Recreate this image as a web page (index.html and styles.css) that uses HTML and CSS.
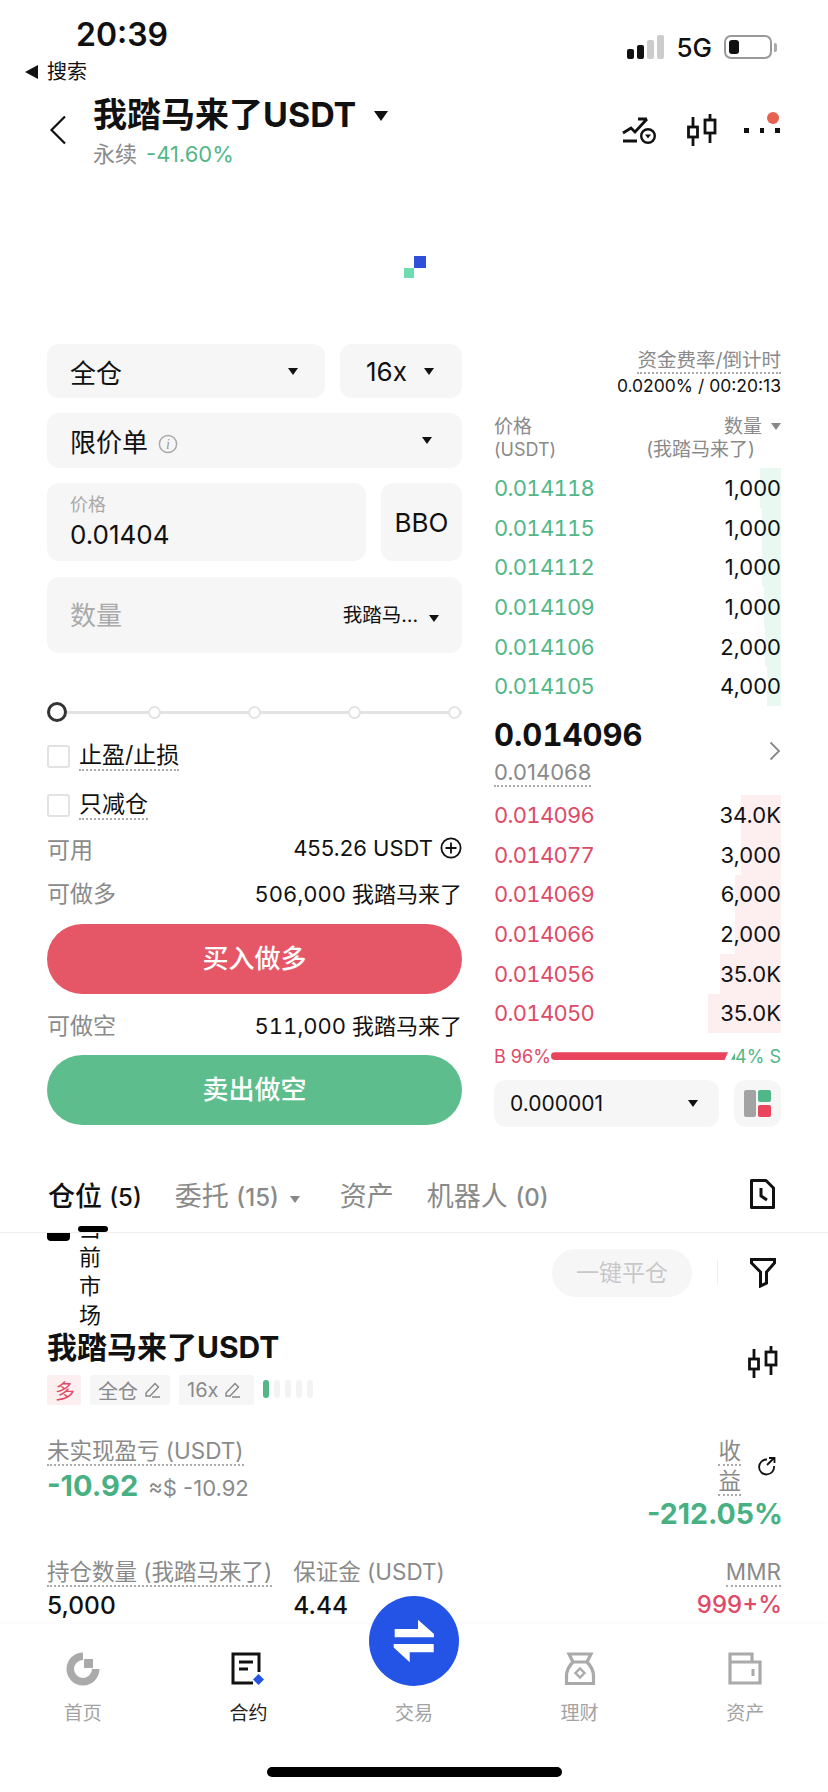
FILE: index.html
```html
<!DOCTYPE html>
<html>
<head>
    <title>我踏马来了USDT</title>
    <link rel="stylesheet" href="styles.css">
</head>
<body>
    <div class="status-bar">
        <div class="status-left">
            <div class="time">20:39</div>
            <div class="back-app"><span class="back-tri"></span>搜索</div>
        </div>
        <div class="status-right">
            <div class="signal">
                <i class="on s1"></i><i class="on s2"></i><i class="s3"></i><i class="s4"></i>
            </div>
            <span class="net">5G</span>
            <div class="battery"><i></i></div>
            <div class="battery-cap"></div>
        </div>
    </div>

    <div class="header">
        <svg class="back" width="18" height="30" viewBox="0 0 18 30"><path d="M16 1.500 2.500 15 16 28.500" fill="none" stroke="#111" stroke-width="2.200"/></svg>
        <div class="header-title">
            <div class="pair">我踏马来了USDT<span class="caret caret-big"></span></div>
            <div class="sub"><span class="sub-name">永续</span><span class="sub-change">-41.60%</span></div>
        </div>
        <div class="header-icons">
            <svg class="chart-ic" width="34" height="28" viewBox="0 0 34 28"><path d="M1 17 9 12l4 4L25 3M16 3h9" fill="none" stroke="#111" stroke-width="2.800"/><path d="M1 25H15" stroke="#111" stroke-width="3"/><circle cx="26" cy="20" r="6.800" fill="#fff" stroke="#111" stroke-width="2.400"/><path d="M23 18.500h6L26 22.500z" fill="#111"/></svg>
            <svg class="candle-ic" width="30" height="32" viewBox="0 0 30 32"><path d="M6 3v10M6 23v9M23 0v6M23 19v10" stroke="#111" stroke-width="2.800"/><rect x="1.500" y="13" width="9" height="10" fill="none" stroke="#111" stroke-width="2.800"/><rect x="18" y="6" width="10" height="13" fill="none" stroke="#111" stroke-width="2.800"/></svg>
            <div class="more"><i></i><i></i><i></i><b></b></div>
        </div>
    </div>

    <div class="loader"><i class="blue"></i><i class="green"></i></div>

    <div class="trade">
        <div class="form">
            <div class="form-row">
                <div class="field margin-mode"><span>全仓</span><span class="caret"></span></div>
                <div class="field leverage"><span>16x</span><span class="caret"></span></div>
            </div>
            <div class="field order-type">
                <span>限价单<svg class="info" width="20" height="20" viewBox="0 0 20 20"><circle cx="10" cy="10" r="8.600" fill="none" stroke="#aaa" stroke-width="1.500"/><text x="10" y="15" text-anchor="middle" class="info-i">i</text></svg></span>
                <span class="caret"></span>
            </div>
            <div class="form-row">
                <div class="field price-box">
                    <div class="field-label">价格</div>
                    <div class="field-value">0.01404</div>
                </div>
                <div class="field bbo">BBO</div>
            </div>
            <div class="field amount-box">
                <span class="amount-ph">数量</span>
                <span class="amount-unit">我踏马…<span class="caret"></span></span>
            </div>

            <div class="slider">
                <i class="thumb"></i><i class="stop"></i><i class="stop"></i><i class="stop"></i><i class="stop"></i>
            </div>

            <div class="check-row"><i class="box"></i><span class="dotted">止盈/止损</span></div>
            <div class="check-row check-second"><i class="box"></i><span class="dotted">只减仓</span></div>

            <div class="info-row info-first">
                <span class="muted">可用</span>
                <span class="info-val">455.26 USDT<svg class="plus" width="22" height="22" viewBox="0 0 22 22"><circle cx="11" cy="11" r="9.600" fill="none" stroke="#111" stroke-width="1.800"/><path d="M11 5.500v11M5.500 11h11" stroke="#111" stroke-width="1.800"/></svg></span>
            </div>
            <div class="info-row">
                <span class="muted">可做多</span>
                <span class="info-val">506,000 我踏马来了</span>
            </div>
            <div class="btn btn-buy">买入做多</div>
            <div class="info-row info-short">
                <span class="muted">可做空</span>
                <span class="info-val">511,000 我踏马来了</span>
            </div>
            <div class="btn btn-sell">卖出做空</div>
        </div>

        <div class="book">
            <div class="funding">
                <div><span class="dotted funding-label">资金费率/倒计时</span></div>
                <div class="funding-val">0.0200% / 00:20:13</div>
            </div>
            <div class="book-head">
                <div>价格<br><span class="head-usdt">(USDT)</span></div>
                <div class="book-head-r">数量<span class="caret caret-grey"></span><br><span class="unit-name">(我踏马来了)</span></div>
            </div>
            <div class="book-rows">
                <div class="ob-row ask"><i class="depth" style="width:21px"></i><span>0.014118</span><b>1,000</b></div>
                <div class="ob-row ask"><i class="depth" style="width:19px"></i><span>0.014115</span><b>1,000</b></div>
                <div class="ob-row ask"><i class="depth" style="width:19px"></i><span>0.014112</span><b>1,000</b></div>
                <div class="ob-row ask"><i class="depth" style="width:17px"></i><span>0.014109</span><b>1,000</b></div>
                <div class="ob-row ask"><i class="depth" style="width:16px"></i><span>0.014106</span><b>2,000</b></div>
                <div class="ob-row ask"><i class="depth" style="width:14px"></i><span>0.014105</span><b>4,000</b></div>
            </div>
            <div class="mid">
                <div>
                    <div class="mid-price">0.014096</div>
                    <span class="dotted mid-mark">0.014068</span>
                </div>
                <svg class="mid-arrow" width="12" height="20" viewBox="0 0 12 20"><path d="M1.500 1.500 10 10l-8.500 8.500" fill="none" stroke="#888" stroke-width="1.800"/></svg>
            </div>
            <div class="book-rows">
                <div class="ob-row bid"><i class="depth" style="width:40px"></i><span>0.014096</span><b>34.0K</b></div>
                <div class="ob-row bid"><i class="depth" style="width:40px"></i><span>0.014077</span><b>3,000</b></div>
                <div class="ob-row bid"><i class="depth" style="width:46px"></i><span>0.014069</span><b>6,000</b></div>
                <div class="ob-row bid"><i class="depth" style="width:46px"></i><span>0.014066</span><b>2,000</b></div>
                <div class="ob-row bid"><i class="depth" style="width:61px"></i><span>0.014056</span><b>35.0K</b></div>
                <div class="ob-row bid"><i class="depth" style="width:73px"></i><span>0.014050</span><b>35.0K</b></div>
            </div>
            <div class="ratio">
                <span class="ratio-b">B 96%</span>
                <i class="ratio-red"></i>
                <i class="ratio-green"></i>
                <span class="ratio-s">4% S</span>
            </div>
            <div class="book-tools">
                <div class="field step"><span>0.000001</span><span class="caret"></span></div>
                <div class="field layout-btn">
                    <i class="lay-grey"></i>
                    <div class="lay-col"><i class="lay-green"></i><i class="lay-red"></i></div>
                </div>
            </div>
        </div>
    </div>

    <div class="tabs">
        <span class="tab tab-on">仓位 <em>(5)</em></span>
        <span class="tab tab-orders">委托 <em>(15)</em><span class="caret caret-grey"></span></span>
        <span class="tab tab-assets">资产</span>
        <span class="tab tab-bots">机器人 <em>(0)</em></span>
        <svg class="tab-clock" width="25" height="30" viewBox="0 0 25 30"><path d="M1.500 1.500H16L23.500 9V28.500H1.500Z" fill="none" stroke="#111" stroke-width="3" stroke-linejoin="round"/><path d="M11 9v8l6 4" fill="none" stroke="#111" stroke-width="3"/></svg>
    </div>

    <div class="scope">
        <i class="scope-blob"></i>
        <div class="scope-clip"><div class="scope-text">当前市场</div></div>
        <i class="scope-pill"></i>
        <div class="close-all">一键平仓</div>
        <i class="scope-line"></i>
        <svg class="filter" width="26" height="30" viewBox="0 0 26 30"><path d="M1.500 1.500h23V5L16.500 14v11l-6 3V14L1.500 5z" fill="none" stroke="#111" stroke-width="3"/></svg>
    </div>

    <div class="position">
        <div class="pos-head">
            <div>
                <div class="pos-name">我踏马来了USDT</div>
                <div class="tags">
                    <span class="tag tag-long">多</span>
                    <span class="tag">全仓<svg width="18" height="18" viewBox="0 0 18 18"><path d="M2 12 11 2.500l3.500 3.500L6 15H2zM8 16h8" fill="none" stroke="#888" stroke-width="1.400"/></svg></span>
                    <span class="tag tag-lev">16x<svg width="18" height="18" viewBox="0 0 18 18"><path d="M2 12 11 2.500l3.500 3.500L6 15H2zM8 16h8" fill="none" stroke="#888" stroke-width="1.400"/></svg></span>
                    <span class="adl"><i class="adl-on"></i><i></i><i></i><i></i><i></i></span>
                </div>
            </div>
            <svg class="pos-candle" width="30" height="32" viewBox="0 0 30 32"><path d="M6 3v10M6 23v9M23 0v6M23 19v10" stroke="#111" stroke-width="2.800"/><rect x="1.500" y="13" width="9" height="10" fill="none" stroke="#111" stroke-width="2.800"/><rect x="18" y="6" width="10" height="13" fill="none" stroke="#111" stroke-width="2.800"/></svg>
        </div>

        <div class="stats-pnl">
            <div>
                <span class="dotted stat-label">未实现盈亏 (USDT)</span>
                <div class="pnl-line"><span class="pnl">-10.92</span><span class="pnl-usd">≈$ -10.92</span></div>
            </div>
            <div class="roi">
                <div class="roi-top">
                    <div class="roi-label"><span class="dotted stat-label">收益</span></div>
                    <svg width="20" height="20" viewBox="0 0 20 20"><path d="M10 3.500A7.500 7.500 0 1 0 17 10" fill="none" stroke="#111" stroke-width="1.800"/><path d="M10 9 17 2M12 2h5.500v5" fill="none" stroke="#111" stroke-width="1.800"/></svg>
                </div>
                <div class="pnl roi-val">-212.05%</div>
            </div>
        </div>

        <div class="stats-size">
            <div class="stat-size">
                <span class="dotted stat-label">持仓数量 (我踏马来了)</span>
                <div class="stat-val">5,000</div>
            </div>
            <div class="stat-margin">
                <span class="stat-label">保证金 (USDT)</span>
                <div class="stat-val">4.44</div>
            </div>
            <div class="stat-mmr">
                <span class="dotted stat-label">MMR</span>
                <div class="stat-val mmr-val">999+%</div>
            </div>
        </div>
    </div>

    <div class="tabbar">
        <div class="nav-item">
            <svg width="34" height="34" viewBox="0 0 34 34"><path d="M17 .5V8A9 9 0 1 0 26 17H33.500A16.500 16.500 0 1 1 17 .5Z" fill="#aaa"/><rect x="18" y="7" width="9" height="9" fill="#aaa"/></svg>
            <span>首页</span>
        </div>
        <div class="nav-item nav-on">
            <svg width="34" height="34" viewBox="0 0 34 34"><path d="M28 20V2H2v29h20" fill="none" stroke="#111" stroke-width="3"/><path d="M8 10h14M8 17h9" fill="none" stroke="#111" stroke-width="3"/><path d="M27.500 22l5.500 5.500-5.500 5.500-5.500-5.500z" fill="#2354e6"/></svg>
            <span>合约</span>
        </div>
        <div class="nav-item nav-trade">
            <span>交易</span>
        </div>
        <div class="nav-item">
            <svg width="32" height="34" viewBox="0 0 32 34"><path d="M5 2h22l-4 8H9zM9 10C5 14 2.500 19 2.500 24v7.500h27V24c0-5-2.500-10-6.500-14" fill="none" stroke="#aaa" stroke-width="3.200"/><path d="M16 16.500l4.500 4.500-4.500 4.500-4.500-4.500z" fill="none" stroke="#aaa" stroke-width="2.400"/></svg>
            <span>理财</span>
        </div>
        <div class="nav-item">
            <svg width="34" height="34" viewBox="0 0 34 34"><path d="M2 10V2h22v8M2 10h30v21H2z" fill="none" stroke="#aaa" stroke-width="3.200"/><path d="M25 17v7" stroke="#aaa" stroke-width="3"/></svg>
            <span>资产</span>
        </div>
    </div>
    <div class="trade-fab">
        <svg width="42" height="44" viewBox="0 0 42 44"><path d="M1.700 10H25V.7L41 15v3.300H1.700zM40.700 25v8.300H16.700v10L.7 28.500V25z" fill="#fff"/></svg>
    </div>
    <div class="home-bar"></div>
</body>
</html>
```

FILE: styles.css
```css
* {
    box-sizing: border-box;
}
body {
    margin: 0;
    width: 828px;
    height: 1792px;
    overflow: hidden;
    position: relative;
    background: #fff;
    color: #111;
    font-family: Inter, "Noto Sans CJK SC", sans-serif;
}
i, em {
    font-style: normal;
}
.caret {
    display: inline-block;
    width: 0;
    height: 0;
    border-left: 5px solid transparent;
    border-right: 5px solid transparent;
    border-top: 7px solid #111;
}
.caret-big {
    border-left-width: 7px;
    border-right-width: 7px;
    border-top-width: 10px;
    margin-left: 18px;
    vertical-align: 6px;
}
.caret-grey {
    border-top-color: #888;
}
.dotted {
    border-bottom: 2px dotted #aaa;
}
.muted {
    color: #8a8a8a;
}

/* status bar */
.status-bar {
    height: 89px;
    display: flex;
    justify-content: space-between;
}
.status-left {
    padding-top: 17px;
}
.time {
    margin-left: 76px;
    font-size: 32px;
    font-weight: 600;
    line-height: 36px;
}
.back-app {
    display: flex;
    align-items: center;
    margin-left: 25px;
    margin-top: 6px;
    font-size: 20px;
    line-height: 26px;
}
.back-tri {
    width: 0;
    height: 0;
    margin-right: 9px;
    border-top: 7.500px solid transparent;
    border-bottom: 7.500px solid transparent;
    border-right: 13px solid #111;
}
.status-right {
    display: flex;
    align-items: center;
    height: 48px;
    margin-top: 23px;
    padding-right: 51px;
}
.signal {
    display: flex;
    align-items: flex-end;
    gap: 3px;
    height: 24px;
}
.signal i {
    width: 7px;
    background: #ccc;
    border-radius: 2px;
}
.signal .on {
    background: #111;
}
.s1 { height: 10px; }
.s2 { height: 14px; }
.s3 { height: 19px; }
.s4 { height: 24px; }
.net {
    margin-left: 12px;
    font-size: 26px;
    font-weight: 500;
}
.battery {
    width: 48px;
    height: 24px;
    margin-left: 12px;
    padding: 3px;
    border: 2px solid #999;
    border-radius: 7px;
}
.battery i {
    display: block;
    width: 10px;
    height: 14px;
    background: #111;
    border-radius: 3px;
}
.battery-cap {
    width: 3px;
    height: 9px;
    margin-left: 2px;
    background: #aaa;
    border-radius: 0 2px 2px 0;
}

/* page header */
.header {
    height: 81px;
    display: flex;
    padding-right: 48px;
}
.back {
    margin: 26px 26px 0 49px;
}
.pair {
    font-size: 34px;
    font-weight: 700;
    line-height: 52px;
}
.sub {
    font-size: 22px;
    line-height: 30px;
    margin-top: -2px;
}
.sub-name {
    color: #8a8a8a;
}
.sub-change {
    color: #52b788;
    margin-left: 9px;
}
.header-icons {
    display: flex;
    margin-left: auto;
    padding-top: 25px;
    gap: 29px;
}
.chart-ic {
    margin-top: 2px;
}
.candle-ic {
    margin: 0 -2px 0 2px;
}
.more {
    position: relative;
    display: flex;
    gap: 11px;
    width: 36px;
    padding-top: 14px;
}
.more i {
    width: 5px;
    height: 5px;
    background: #111;
}
.more b {
    position: absolute;
    right: 1px;
    top: -2px;
    width: 12px;
    height: 12px;
    border-radius: 50%;
    background: #e8604f;
}

/* chart loading mark */
.loader {
    height: 174px;
    position: relative;
}
.loader i {
    position: absolute;
}
.blue {
    left: 414px;
    top: 86px;
    width: 12px;
    height: 12px;
    background: #2f4fd8;
}
.green {
    left: 404px;
    top: 98px;
    width: 10px;
    height: 10px;
    background: #6fdcb0;
}

/* order form + book */
.trade {
    display: flex;
    padding: 0 47px;
    gap: 32px;
}
.form {
    width: 415px;
}
.form-row {
    display: flex;
    gap: 15px;
}
.field {
    display: flex;
    align-items: center;
    justify-content: space-between;
    background: #f6f6f7;
    border-radius: 12px;
}
.margin-mode {
    flex: 1;
    height: 54px;
    padding: 0 27px 0 23px;
    font-size: 26px;
}
.leverage {
    width: 122px;
    height: 54px;
    padding: 0 28px 0 26px;
    font-size: 26px;
}
.order-type {
    height: 55px;
    margin: 15px 0;
    padding: 0 30px 0 23px;
    font-size: 26px;
}
.info {
    margin-left: 10px;
    vertical-align: -2px;
}
.info-i {
    font: italic 14px "Liberation Serif", serif;
    fill: #999;
}
.price-box {
    flex: 1;
    height: 78px;
    display: block;
    padding: 10px 23px;
}
.field-label {
    color: #aaa;
    font-size: 18px;
    line-height: 24px;
}
.field-value {
    font-size: 26px;
    line-height: 36px;
}
.bbo {
    width: 81px;
    height: 78px;
    justify-content: center;
    font-size: 26px;
}
.amount-box {
    height: 76px;
    margin-top: 16px;
    padding: 0 23px 4px;
}
.amount-ph {
    color: #aaa;
    font-size: 26px;
}
.amount-unit {
    font-size: 19.500px;
}
.amount-unit .caret {
    margin-left: 11px;
}

.slider {
    display: flex;
    align-items: center;
    height: 20px;
    margin-top: 49px;
    background: linear-gradient(#e3e3e3, #e3e3e3) center / 100% 3px no-repeat;
}
.thumb {
    width: 20px;
    height: 20px;
    background: #fff;
    border: 3px solid #333;
    border-radius: 50%;
}
.stop {
    width: 13px;
    height: 13px;
    margin-left: 87px;
    background: #fff;
    border: 2px solid #e3e3e3;
    border-radius: 50%;
}
.thumb + .stop {
    margin-left: 81px;
}
.check-row {
    display: flex;
    align-items: center;
    gap: 9px;
    margin-top: 21px;
    height: 26px;
    font-size: 23px;
}
.check-second {
    margin-top: 23px;
}
.box {
    width: 23px;
    height: 23px;
    border: 2px solid #e2e2e2;
    border-radius: 3px;
}
.check-row .dotted {
    line-height: 28px;
}
.info-row {
    display: flex;
    justify-content: space-between;
    align-items: center;
    height: 30px;
    margin-top: 14px;
    font-size: 22px;
}
.info-row .muted {
    font-size: 23px;
}
.info-first {
    margin-top: 15px;
}
.info-val {
    display: flex;
    align-items: center;
    font-variant-numeric: tabular-nums;
}
.info-first .info-val {
    font-variant-numeric: normal;
}
.plus {
    margin-left: 7px;
}
.btn {
    height: 70px;
    border-radius: 35px;
    color: #fff;
    font-size: 26px;
    font-weight: 500;
    line-height: 70px;
    text-align: center;
}
.btn-buy {
    margin-top: 17px;
    background: #e55766;
}
.btn-sell {
    margin-top: 16px;
    background: #5dbd8c;
}
.info-short {
    margin-top: 15px;
}

.book {
    width: 287px;
    padding-top: 3px;
}
.funding {
    text-align: right;
}
.funding-label {
    color: #8a8a8a;
    font-size: 19.500px;
    line-height: 26px;
}
.funding-val {
    font-size: 17.500px;
    line-height: 24px;
    margin-top: 1px;
}
.book-head {
    display: flex;
    justify-content: space-between;
    margin-top: 17px;
    color: #8a8a8a;
    font-size: 19px;
    line-height: 23px;
}
.head-usdt {
    font-size: 18px;
}
.book-head-r {
    text-align: right;
}
.book-head-r .caret {
    margin-left: 9px;
    vertical-align: 3px;
}
.unit-name {
    margin-right: 26px;
}
.book-rows {
    margin-top: 7px;
}
.ob-row {
    position: relative;
    display: flex;
    justify-content: space-between;
    align-items: center;
    height: 39.700px;
    font-size: 22px;
}
.ob-row b {
    position: relative;
    font-weight: 400;
}
.ob-row span {
    position: relative;
    font-variant-numeric: tabular-nums;
    letter-spacing: -0.7px;
}
.depth {
    position: absolute;
    right: 0;
    top: 0;
    bottom: 0;
}
.ask span { color: #52b788; }
.ask .depth { background: #e9f8f1; }
.bid span { color: #dd4b68; }
.bid .depth { background: #fdeef0; }
.mid {
    display: flex;
    justify-content: space-between;
    align-items: flex-start;
    height: 86px;
    margin-bottom: -4px;
    padding-top: 9px;
}
.mid-price {
    font-size: 31px;
    font-weight: 700;
    line-height: 40px;
    font-variant-numeric: tabular-nums;
}
.mid-mark {
    display: inline-block;
    margin-top: 4px;
    color: #8a8a8a;
    font-size: 22px;
    line-height: 26px;
}
.mid-arrow {
    margin-top: 26px;
}
.ratio {
    display: flex;
    align-items: center;
    height: 24px;
    margin-top: 11px;
    font-size: 18px;
}
.ratio-b {
    color: #dd4b68;
    width: 57px;
}
.ratio-s {
    color: #52b788;
    margin-left: auto;
}
.ratio-red {
    width: 177px;
    height: 8px;
    background: #e8455c;
    border-radius: 4px 0 0 4px;
    clip-path: polygon(0 0, 100% 0, 98% 100%, 0 100%);
}
.ratio-green {
    width: 4px;
    height: 7px;
    margin-left: 3px;
    background: #52b788;
    clip-path: polygon(100% 0, 100% 100%, 0 100%);
}
.book-tools {
    display: flex;
    justify-content: space-between;
    margin-top: 12px;
}
.step {
    width: 225px;
    height: 47px;
    padding: 0 21px 0 16px;
    font-size: 21px;
}
.layout-btn {
    width: 47px;
    height: 47px;
    justify-content: center;
    gap: 2px;
}
.lay-grey {
    width: 12px;
    height: 27px;
    background: #a3a3a3;
    border-radius: 2px;
}
.lay-col {
    display: flex;
    flex-direction: column;
    gap: 3px;
}
.lay-green, .lay-red {
    width: 13px;
    height: 12px;
    border-radius: 2px;
}
.lay-green { background: #52b788; }
.lay-red { background: #e8455c; }

/* position tabs */
.tabs {
    display: flex;
    align-items: center;
    height: 106px;
    padding: 29px 53px 0 48px;
    border-bottom: 1px solid #eee;
    font-size: 27px;
    color: #8a8a8a;
}
.tab em {
    font-size: 24px;
    font-weight: 500;
}
.tab-on {
    color: #111;
    font-weight: 500;
}
.tab-orders {
    margin-left: 33px;
}
.tab-orders .caret {
    margin-left: 11px;
    vertical-align: 3px;
}
.tab-assets {
    margin-left: 40px;
}
.tab-bots {
    margin-left: 33px;
}
.tab-clock {
    margin-left: auto;
}

.scope {
    position: relative;
    display: flex;
    height: 98px;
    padding-left: 47px;
}
.scope-blob {
    width: 23px;
    height: 8px;
    background: #000;
    border-radius: 0 0 4px 4px;
}
.scope-clip {
    width: 22px;
    height: 98px;
    margin-left: 9px;
    overflow: hidden;
}
.scope-text {
    margin-top: -19px;
    font-size: 22px;
    line-height: 29px;
}
.scope-pill {
    position: absolute;
    left: 78px;
    top: -7px;
    width: 30px;
    height: 6px;
    background: #000;
    border-radius: 3px;
}
.close-all {
    width: 140px;
    height: 48px;
    margin: 16px 0 0 auto;
    background: #f6f6f7;
    border-radius: 24px;
    color: #c8c8c8;
    font-size: 23px;
    line-height: 48px;
    text-align: center;
}
.scope-line {
    width: 1px;
    height: 25px;
    margin: 27px 32px 0 25px;
    background: #eee;
}
.filter {
    margin: 25px 52px 0 0;
}

.position {
    padding: 0 47px;
}
.pos-head {
    display: flex;
    justify-content: space-between;
    height: 74px;
}
.pos-name {
    font-size: 30px;
    font-weight: 700;
    line-height: 32px;
}
.pos-candle {
    margin: 15px 3px 0 0;
}
.tags {
    display: flex;
    margin-top: 12px;
    gap: 9px;
    font-size: 20px;
    color: #8a8a8a;
}
.tag {
    display: flex;
    align-items: center;
    gap: 6px;
    width: 80px;
    height: 30px;
    padding-left: 8px;
    background: #f6f6f7;
    border-radius: 2px;
}
.tag-long {
    width: 34px;
    color: #dd4b68;
    background: #fdeef0;
}
.tag-lev {
    width: 75px;
}
.adl {
    display: flex;
    gap: 5px;
    padding-top: 5px;
}
.adl i {
    width: 6px;
    height: 18px;
    background: #f3f3f3;
    border-radius: 3px;
}
.adl .adl-on {
    background: #52b788;
}
.stat-label {
    color: #8a8a8a;
    font-size: 22.500px;
    line-height: 26px;
}
.stats-pnl {
    display: flex;
    justify-content: space-between;
    margin-top: 33px;
}
.pnl-line {
    display: flex;
    align-items: baseline;
    margin-top: 3px;
}
.pnl {
    color: #48b183;
    font-size: 29px;
    font-weight: 700;
    line-height: 38px;
}
.pnl-usd {
    color: #8a8a8a;
    font-size: 22px;
    margin-left: 10px;
}
.roi {
    margin-top: -2px;
    text-align: right;
}
.roi-top {
    display: flex;
    justify-content: flex-end;
    align-items: center;
    gap: 16px;
    padding-right: 4px;
}
.roi-label {
    width: 24px;
    font-size: 22.500px;
    line-height: 29.500px;
    word-break: break-all;
}
.roi-val {
    margin-right: -2px;
    font-size: 28.500px;
}
.stats-size {
    display: flex;
    margin-top: 26px;
}
.stat-margin {
    margin-left: 21px;
}
.stat-mmr {
    margin-left: auto;
    text-align: right;
}
.stat-val {
    font-size: 24.500px;
    font-weight: 500;
    line-height: 34px;
    margin-top: 3px;
}
.mmr-val {
    margin-right: -1px;
    color: #dd4b68;
    font-size: 24px;
}

/* bottom nav */
.tabbar {
    position: absolute;
    left: 0;
    right: 0;
    bottom: 0;
    height: 168px;
    display: flex;
    background: #fff;
    box-shadow: 0 -1px 4px rgba(0, 0, 0, 0.03);
}
.nav-item {
    flex: 1;
    display: flex;
    flex-direction: column;
    align-items: center;
    padding-top: 28px;
    color: #a3a3a3;
    font-size: 19px;
}
.nav-item span {
    margin-top: 15px;
    line-height: 26px;
}
.nav-on {
    color: #222;
}
.nav-trade span {
    margin-top: 49px;
}
.trade-fab {
    position: absolute;
    left: 369px;
    top: 1596px;
    width: 90px;
    height: 90px;
    display: flex;
    align-items: center;
    justify-content: center;
    background: #2354e6;
    border-radius: 50%;
}
.home-bar {
    position: absolute;
    left: 267px;
    top: 1767px;
    width: 295px;
    height: 10px;
    background: #000;
    border-radius: 5px;
}
```
